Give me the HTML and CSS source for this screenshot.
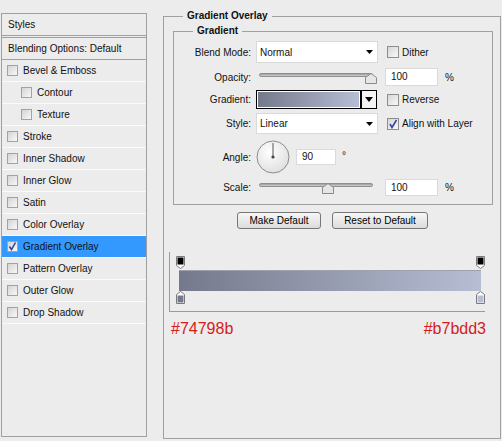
FILE: index.html
```html
<!DOCTYPE html>
<html>
<head>
<meta charset="utf-8">
<link rel="stylesheet" href="styles.css">
</head>
<body>
<div class="app">
  <aside class="styles-panel">
    <div class="sp-head">Styles</div>
    <div class="sp-blend">Blending Options: Default</div>
    <ul class="sp-list">
      <li class="sp-item"><span class="cb"></span>Bevel &amp; Emboss</li>
      <li class="sp-item sub"><span class="cb"></span>Contour</li>
      <li class="sp-item sub"><span class="cb"></span>Texture</li>
      <li class="sp-item"><span class="cb"></span>Stroke</li>
      <li class="sp-item"><span class="cb"></span>Inner Shadow</li>
      <li class="sp-item"><span class="cb"></span>Inner Glow</li>
      <li class="sp-item"><span class="cb"></span>Satin</li>
      <li class="sp-item"><span class="cb"></span>Color Overlay</li>
      <li class="sp-item active"><span class="cb"><svg width="9" height="9" viewBox="0 0 9 9"><path d="M1.5 4.5L3.5 7.5L7.5 0.5" fill="none" stroke="#2c3d91" stroke-width="1.5"/></svg></span>Gradient Overlay</li>
      <li class="sp-item"><span class="cb"></span>Pattern Overlay</li>
      <li class="sp-item"><span class="cb"></span>Outer Glow</li>
      <li class="sp-item"><span class="cb"></span>Drop Shadow</li>
    </ul>
  </aside>

  <fieldset class="go">
    <legend>Gradient Overlay</legend>
    <fieldset class="grad">
      <legend>Gradient</legend>

      <div class="row r1">
        <span class="lbl">Blend Mode:</span>
        <div class="select"><span>Normal</span><svg class="arr" width="7" height="4" viewBox="0 0 7 4"><path d="M0 0H7L3.5 4Z" fill="#000"/></svg></div>
        <span class="chk"></span><span class="chk-l">Dither</span>
      </div>

      <div class="row r2">
        <span class="lbl">Opacity:</span>
        <div class="slider">
          <div class="track"></div>
          <svg class="thumb t-op" width="12" height="11" viewBox="0 0 12 11"><path d="M0.5 10.5V4.5L6 0.5L11.5 4.5V10.5Z" fill="#e6e6e6" stroke="#8a8a8a"/></svg>
        </div>
        <div class="num">100</div><span class="unit">%</span>
      </div>

      <div class="row r3">
        <span class="lbl">Gradient:</span>
        <div class="gradbox">
          <div class="gfill"></div>
          <div class="gbtn"><svg width="8" height="5" viewBox="0 0 8 5"><path d="M0 0H8L4 5Z" fill="#000"/></svg></div>
        </div>
        <span class="chk"></span><span class="chk-l">Reverse</span>
      </div>

      <div class="row r4">
        <span class="lbl">Style:</span>
        <div class="select"><span>Linear</span><svg class="arr" width="7" height="4" viewBox="0 0 7 4"><path d="M0 0H7L3.5 4Z" fill="#000"/></svg></div>
        <span class="chk"><svg width="10" height="10" viewBox="0 0 10 10"><path d="M2 5L4 8.5L8.5 1" fill="none" stroke="#3547a0" stroke-width="1.6"/></svg></span><span class="chk-l">Align with Layer</span>
      </div>

      <div class="row r5">
        <span class="lbl">Angle:</span>
        <svg class="dial" width="34" height="34" viewBox="0 0 34 34">
          <defs>
            <radialGradient id="dg" cx="0.4" cy="0.35" r="0.7">
              <stop offset="0" stop-color="#ffffff"/>
              <stop offset="1" stop-color="#dedede"/>
            </radialGradient>
          </defs>
          <circle cx="17" cy="17" r="16" fill="url(#dg)" stroke="#8c8c8c"/>
          <line x1="17" y1="17" x2="17" y2="3" stroke="#555" stroke-width="1"/>
          <circle cx="17" cy="17" r="1.6" fill="#444"/>
        </svg>
        <div class="num small">90</div><span class="deg">°</span>
      </div>

      <div class="row r6">
        <span class="lbl">Scale:</span>
        <div class="slider">
          <div class="track"></div>
          <svg class="thumb t-sc" width="12" height="11" viewBox="0 0 12 11"><path d="M0.5 10.5V4.5L6 0.5L11.5 4.5V10.5Z" fill="#e6e6e6" stroke="#8a8a8a"/></svg>
        </div>
        <div class="num">100</div><span class="unit">%</span>
      </div>
    </fieldset>

    <div class="btns">
      <button class="btn b-make">Make Default</button>
      <button class="btn b-reset">Reset to Default</button>
    </div>

    <div class="editor">
      <svg class="stop st-tl" width="9" height="13" viewBox="0 0 9 13"><path d="M0.5 0.5H8.5V9.5L4.5 12.5L0.5 9.5Z" fill="#fff" stroke="#7a7a7a"/><rect x="1.5" y="1.5" width="6" height="7" fill="#000"/></svg>
      <svg class="stop st-tr" width="9" height="13" viewBox="0 0 9 13"><path d="M0.5 0.5H8.5V9.5L4.5 12.5L0.5 9.5Z" fill="#fff" stroke="#7a7a7a"/><rect x="1.5" y="1.5" width="6" height="7" fill="#000"/></svg>
      <div class="bar"></div>
      <svg class="stop st-bl" width="9" height="13" viewBox="0 0 9 13"><path d="M0.5 12.5H8.5V3.5L4.5 0.5L0.5 3.5Z" fill="#fff" stroke="#7a7a7a"/><rect x="1.5" y="4.5" width="6" height="7" fill="#74798b"/></svg>
      <svg class="stop st-br" width="9" height="13" viewBox="0 0 9 13"><path d="M0.5 12.5H8.5V3.5L4.5 0.5L0.5 3.5Z" fill="#fff" stroke="#7a7a7a"/><rect x="1.5" y="4.5" width="6" height="7" fill="#b7bdd3"/></svg>
    </div>

    <div class="hexes"><span>#74798b</span><span>#b7bdd3</span></div>
  </fieldset>
</div>
</body>
</html>
```

FILE: styles.css
```css
* { box-sizing: border-box; }
html, body { margin: 0; padding: 0; }
body {
  background: #ececec;
  font-family: "Liberation Sans", Arial, sans-serif;
  font-size: 10px;
  color: #111;
  width: 502px;
  height: 441px;
  overflow: hidden;
}
.app {
  display: flex;
  align-items: flex-start;
  padding-left: 1px;
}

/* ---------- left styles panel ---------- */
.styles-panel {
  width: 146px;
  height: 424px;
  margin-top: 13px;
  border: 1px solid #a0a0a0;
}
.sp-head {
  height: 24px;
  line-height: 21px;
  padding-left: 6px;
  border-bottom: 3px double #a0a0a0;
}
.sp-blend {
  height: 22px;
  line-height: 21px;
  padding-left: 6px;
  border-bottom: 1px solid #a0a0a0;
}
.sp-list { list-style: none; margin: 0; padding: 0; }
.sp-item {
  height: 22px;
  display: flex;
  align-items: center;
  gap: 5px;
  padding-left: 5px;
  border-bottom: 1px solid #fbfbfb;
}
.sp-item.sub { padding-left: 19px; }
.sp-item.active { background: #3399ff; }
.cb {
  width: 11px;
  height: 11px;
  flex: none;
  border: 1px solid #a2a2a2;
  background: linear-gradient(135deg, #d4d4d4, #f8f8f8);
  display: flex;
  align-items: center;
  justify-content: center;
}

/* ---------- gradient overlay fieldset ---------- */
.go {
  width: 338px;
  height: 429px;
  margin: 10px 0 0 16px;
  padding: 0 8px 0 5px;
  border: 1px solid #a0a0a0;
  min-width: 0;
}
.go > legend {
  font-weight: bold;
  line-height: 12px;
  padding: 0 4px;
  margin-left: 14px;
}
.grad {
  width: 320px;
  margin: 3px 0 0 4px;
  padding: 4px 0 7px 0;
  border: 1px solid #a0a0a0;
  min-width: 0;
}
.grad > legend {
  font-weight: bold;
  line-height: 12px;
  padding: 0 4px;
  margin-left: 19px;
}
.row {
  display: flex;
  align-items: center;
}
.r1 { height: 22px; }
.r2 { height: 20px; margin-top: 4px; }
.r3 { height: 19px; margin-top: 3px; }
.r4 { height: 21px; margin-top: 4px; }
.r5 { height: 34px; margin-top: 6px; }
.r6 { height: 19px; margin-top: 4px; }
.lbl {
  width: 77px;
  margin-right: 5px;
  text-align: right;
  flex: none;
}
.select {
  width: 122px;
  height: 100%;
  background: #fff;
  border: 1px solid #dadada;
  display: flex;
  align-items: center;
  justify-content: space-between;
  padding: 0 4px 0 3px;
  flex: none;
}
.r4 .select { height: 21px; }
.chk {
  width: 12px;
  height: 12px;
  margin-left: 9px;
  flex: none;
  border: 1px solid #8e8e8e;
  background: linear-gradient(135deg, #d6d6d6, #f8f8f8);
  display: flex;
  align-items: center;
  justify-content: center;
}
.chk-l { margin-left: 3px; }

.slider {
  width: 122px;
  height: 11px;
  position: relative;
  flex: none;
  margin-top: 2px;
}
.track {
  width: 114px;
  height: 4px;
  margin-left: 3px;
  border-radius: 2px;
  border: 1px solid #8f8f8f;
  background: linear-gradient(#9a9a9a, #d4d4d4);
}
.thumb { position: absolute; top: 0; }
.t-op { left: 109px; }
.t-sc { left: 66px; }
.num {
  width: 53px;
  height: 18px;
  margin-left: 7px;
  background: #fff;
  border: 1px solid #dadada;
  padding-left: 5px;
  line-height: 16px;
  flex: none;
}
.r6 .num { height: 17px; line-height: 15px; }
.num.small { width: 40px; height: 16px; line-height: 14px; margin-left: 6px; }
.unit { margin-left: 7px; }
.deg { margin-left: 6px; align-self: flex-start; margin-top: 10px; }
.dial { flex: none; }

.gradbox {
  width: 121px;
  height: 19px;
  border: 1px solid #000;
  background: #fff;
  display: flex;
  flex: none;
}
.gfill {
  flex: 1;
  margin: 1px;
  background: linear-gradient(to right, #74798b, #b7bdd3);
}
.gbtn {
  width: 16px;
  border-left: 2px solid #000;
  background: #f4f4f4;
  display: flex;
  align-items: center;
  justify-content: center;
}
.r3 .chk { margin-left: 10px; }

/* ---------- buttons ---------- */
.btns {
  display: flex;
  justify-content: center;
  gap: 11px;
  margin-top: 7px;
  padding-left: 4px;
}
.btn {
  height: 17px;
  padding: 0;
  font-family: "Liberation Sans", Arial, sans-serif;
  font-size: 10px;
  color: #000;
  border: 1px solid #777;
  border-radius: 3px;
  background: linear-gradient(#f6f6f6, #dcdcdc);
}
.b-make { width: 84px; }
.b-reset { width: 96px; }

/* ---------- gradient editor ---------- */
.editor {
  position: relative;
  width: 316px;
  height: 60px;
  margin-top: 23px;
  border-left: 1px solid #9a9a9a;
  border-bottom: 1px solid #9a9a9a;
  padding: 18px 0 0 9px;
}
.bar {
  width: 302px;
  height: 21px;
  background: linear-gradient(to right, #74798b, #b7bdd3);
  border-top: 1px solid #9ea2b0;
}
.stop { position: absolute; }
.st-tl { left: 6px; top: 4px; }
.st-tr { left: 306px; top: 4px; }
.st-bl { left: 6px; top: 39px; }
.st-br { left: 306px; top: 39px; }

.hexes {
  width: 315px;
  margin: 8px 0 0 2px;
  display: flex;
  justify-content: space-between;
  font-family: "Liberation Sans", Arial, sans-serif;
  font-size: 16px;
  color: #d41c1c;
}
```
